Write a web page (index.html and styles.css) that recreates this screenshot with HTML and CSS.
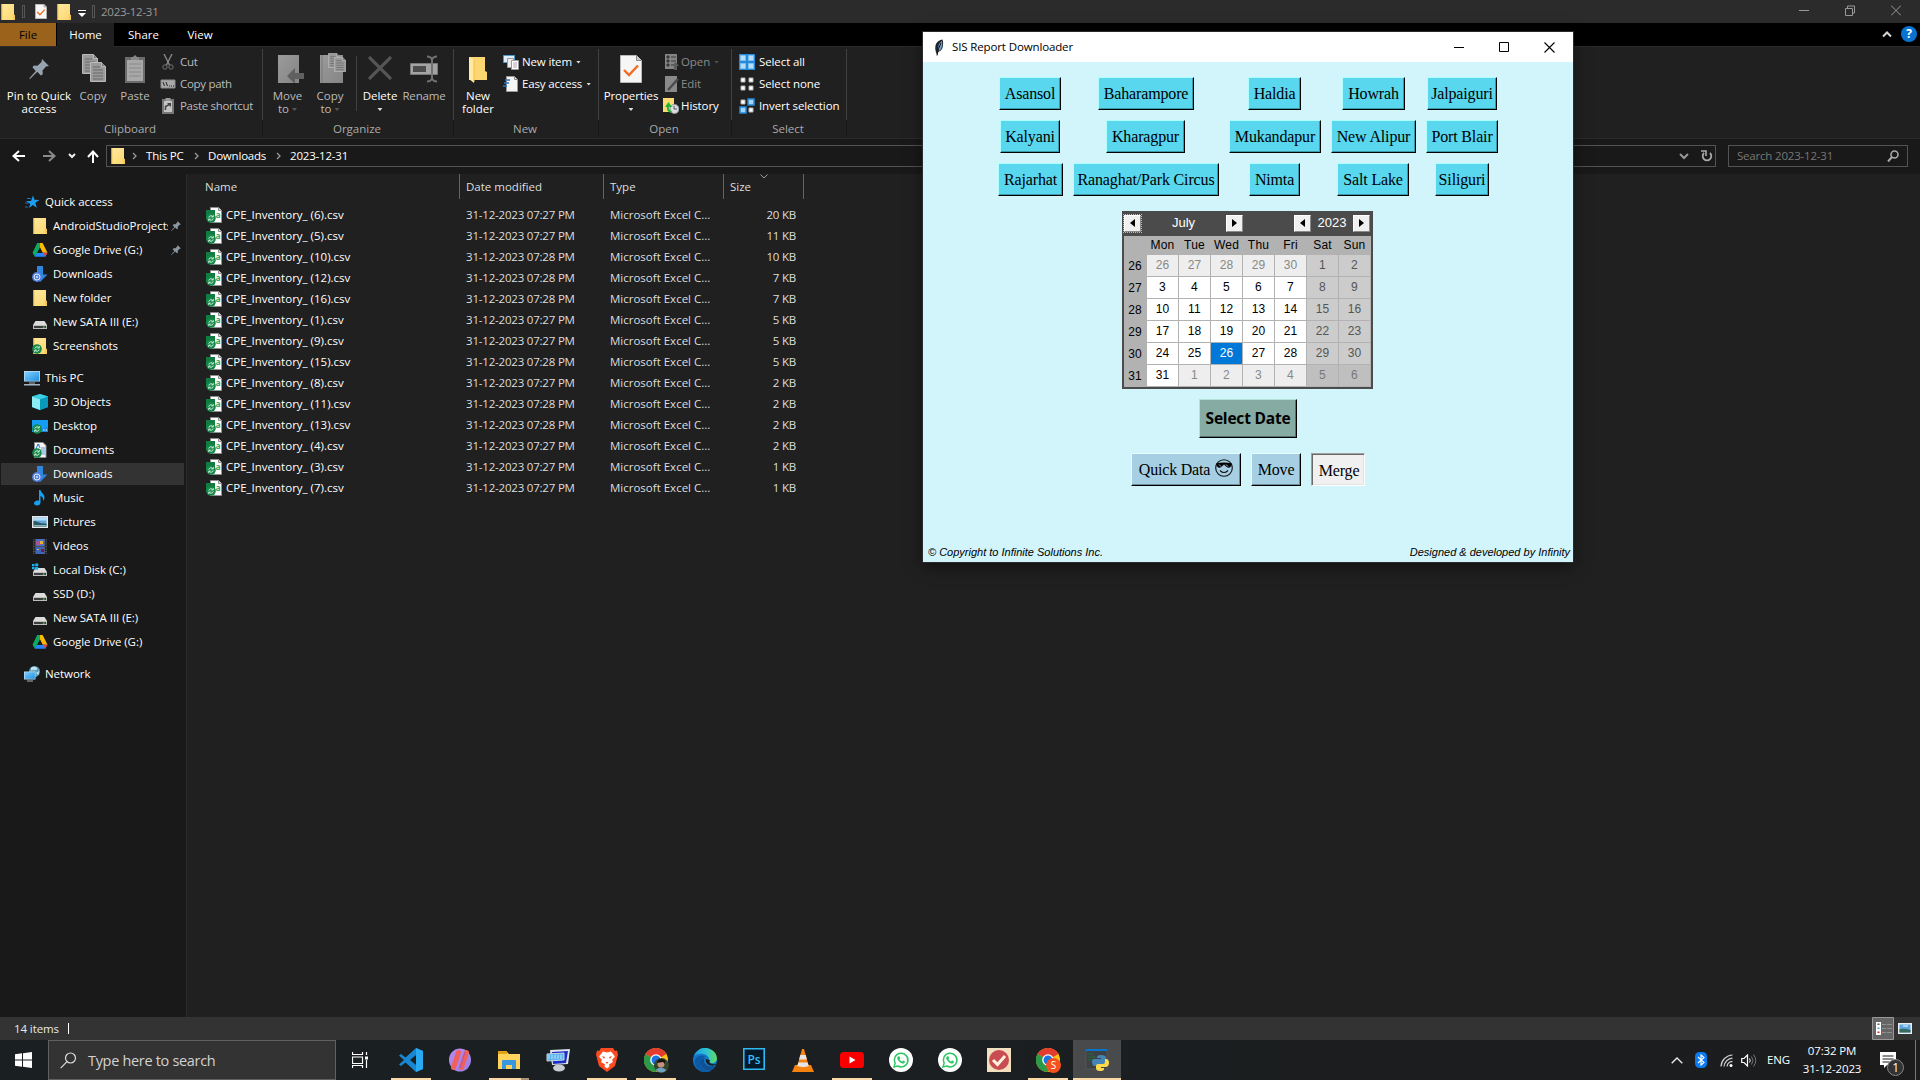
FILE: index.html
```html
<!DOCTYPE html>
<html lang="en">
<head>
<meta charset="utf-8">
<title>2023-12-31</title>
<link rel="stylesheet" href="styles.css">
</head>
<body>
<svg class="sprite" aria-hidden="true">
  <defs>
    <linearGradient id="g-fold" x1="0" y1="0" x2="1" y2="1"><stop offset="0" stop-color="#ffe9a2"/><stop offset="1" stop-color="#fbd66b"/></linearGradient>
    <linearGradient id="g-edge" x1="0" y1="0" x2="1" y2="0"><stop offset="0" stop-color="#1a9de0"/><stop offset=".55" stop-color="#2fc3cf"/><stop offset="1" stop-color="#62db5c"/></linearGradient>
    <linearGradient id="g-screen" x1="0" y1="0" x2="1" y2="1"><stop offset="0" stop-color="#7fd0ff"/><stop offset="1" stop-color="#2290e0"/></linearGradient>
    <linearGradient id="g-purple" x1="0" y1="0" x2="1" y2="1"><stop offset="0" stop-color="#b98af0"/><stop offset="1" stop-color="#9a80e0"/></linearGradient>
    <linearGradient id="g-gray" x1="0" y1="0" x2="1" y2="1"><stop offset="0" stop-color="#9b9b9b"/><stop offset="1" stop-color="#858585"/></linearGradient>
  </defs>
  <symbol id="folder" viewBox="0 0 16 16"><path d="M1.500 0H14v10.500l1 .5v5H1.500z" fill="url(#g-fold)"/><path d="M1.500 0h1v16h-1zM13 11h2v5h-2z" fill="#f4c95a"/></symbol>
  <symbol id="badge" viewBox="0 0 10 10"><circle cx="5" cy="5" r="4.800" fill="#16894a"/><path d="M2.800 4.600a2.300 2.300 0 0 1 4-1M7.200 5.400a2.300 2.300 0 0 1-4 1" fill="none" stroke="#d9f5e4" stroke-width="1"/><path d="M7.300 2v2H5.300M2.700 8V6h2" fill="none" stroke="#d9f5e4" stroke-width=".8"/></symbol>
  <symbol id="csv" viewBox="0 0 16 16"><path d="M4.500.5h8L15.500 3.500v12h-11z" fill="#fff" stroke="#8f8f8f"/><path d="M12.500.5v3h3" fill="#ddd" stroke="#8f8f8f"/><path d="M0 3h9v9H0z" fill="#107c41"/><use href="#badge" x="0" y="6" width="10" height="10"/></symbol>
  <symbol id="pin" viewBox="0 0 20 20"><path d="M13 0l7 7-3 .5-3.500 4 .3 3.700-2 1.300-3.500-3.700L1 20l-.8-.6 6.600-7.400-3.400-3.700 1.500-1.800 3.600.2 4-3.600z" fill="currentColor"/></symbol>
  <symbol id="star" viewBox="0 0 16 16"><path d="M9 1.500l1.500 4.200 5 .3-4.200 2.800 1.400 5L8.800 11 5 14l1.200-4.200L2 7h5z" fill="#1b9ef0"/><path d="M3 4.500h4M1 9h4M1 13h3" stroke="#1574b8"/></symbol>
  <symbol id="gdrive" viewBox="0 0 16 16"><path d="M5.400 1H8l3 5-3-.5-3 5.300L3 14.800l-2.300-4z" fill="#0da960"/><path d="M5.400 1h5.200l4.900 9.800h-5z" fill="#ffba00"/><path d="M5.400 1H8v4.500l-2.800 5.300L3 14.500l-2.300-3.700z" fill="#0da960"/><path d="M5 10.800h10.500l-2.300 4H3z" fill="#2684fc"/><path d="M11.500 10.800h4l-2.300 4z" fill="#ea4335"/><path d="M8 5.500l2.600 5.300H5.200z" fill="#191919"/></symbol>
  <symbol id="down" viewBox="0 0 16 16"><path d="M5 0h6v8.500h4.500L8 16 1 8.500h4z" fill="#2f86dc"/><circle cx="5" cy="11" r="5" fill="#4d7fe0"/><circle cx="5" cy="11" r="3" fill="none" stroke="#e6eeff"/><circle cx="5" cy="11" r="1" fill="#e6eeff"/></symbol>
  <symbol id="drive" viewBox="0 0 16 16"><path d="M3.500 7h9l2.500 4H1z" fill="#dcdcdc"/><path d="M1 11h14v4H1z" fill="#bdbdbd"/><path d="M2 12h12v2H2z" fill="#3d3d3d"/><path d="M11 12.500h1.500v1.200H11z" fill="#3fe03f"/></symbol>
  <symbol id="windrive" viewBox="0 0 16 16"><use href="#drive" width="16" height="16" y="-1"/><path d="M0 2h2.500v2.200H0zM3.200 1.500h3v2.700h-3zM0 5h2.500v2.200H0zM3.200 5h3v2.700h-3z" fill="#14b4f2"/></symbol>
  <symbol id="shots" viewBox="0 0 16 16"><use href="#folder" width="16" height="16"/><use href="#badge" y="6" width="10" height="10"/></symbol>
  <symbol id="pc" viewBox="0 0 16 16"><path d="M0 1h16v10.500H0z" fill="#b8dcf2"/><path d="M.8 1.800h14.400v9H.8z" fill="url(#g-screen)"/><path d="M5 12.500h6v1H5zM0 14h16v1.500H0z" fill="#9fb4c4"/></symbol>
  <symbol id="cube" viewBox="0 0 16 16"><path d="M8 0l8 2.500V13l-8 3-8-3V2.500z" fill="#19b8d6"/><path d="M0 2.500l8 2.700V16l-8-3z" fill="#8ceaf2"/><path d="M8 5.200l8-2.700V13l-8 3z" fill="#0899bc"/><path d="M0 2.500L8 0l8 2.500-8 2.700z" fill="#3bd0e2"/></symbol>
  <symbol id="desk" viewBox="0 0 16 16"><path d="M0 2h16v12H0z" fill="#1587d8"/><path d="M0 2h16v7L5 14H0z" fill="#159cf5"/><path d="M11 12h1.500M13.500 12H15" stroke="#fff"/><use href="#badge" y="6" width="10" height="10"/></symbol>
  <symbol id="docs" viewBox="0 0 16 16"><path d="M2.500.5H11l3 3v12H2.500z" fill="#f4f4f4" stroke="#8e8e8e"/><path d="M5 3h3M9 6h4M9 8h4M10 10h3M10 12h3" stroke="#5a9ad2"/><path d="M4 7l2-5 2 4" fill="none" stroke="#2a7fcc"/><use href="#badge" y="6" width="10" height="10"/></symbol>
  <symbol id="music" viewBox="0 0 16 16"><path d="M7 0h1.500c.5 3 4.500 4 4 8-.2 1.500-1 2-1.500 3 .5-3-1-4.500-2.500-5v6.500c0 1.700-1.500 3-3.500 3S2 14.500 2 13.300 3.500 10.500 5.500 10.500c.6 0 1 .1 1.500.3z" fill="#16a0f2"/></symbol>
  <symbol id="pics" viewBox="0 0 16 16"><path d="M0 2h16v12H0z" fill="#e8e8e8"/><path d="M1.500 3.500h13v9h-13z" fill="#62a7dc"/><path d="M1.500 3.500h13v3h-13z" fill="#b5dcf5"/><path d="M1.500 7c4 0 6 3 13 2.500v3h-13z" fill="#2a5a62"/><path d="M1.500 11h13v1.500h-13z" fill="#8bb0b6"/></symbol>
  <symbol id="vids" viewBox="0 0 16 16"><path d="M1 1h14v15H1z" fill="#4c4c4c"/><path d="M4 1h8.500v7H4z" fill="#4b6fc4"/><path d="M4 9h8.500v7H4z" fill="#3f66bd"/><path d="M4 4l3-1 3 4H4z" fill="#b0508c"/><path d="M8 3h3v3H8zM5 11h2v1H5z" fill="#e0b33a"/><path d="M9 11h3v3H9z" fill="#6e1e3e"/><path d="M2.300 1.500v14M13.800 1.500v14" stroke="#131313" stroke-width="1.300" stroke-dasharray="1.500 1"/></symbol>
  <symbol id="net" viewBox="0 0 16 16"><circle cx="10.500" cy="5.500" r="5.500" fill="#5a9cba"/><path d="M7 2c2-2 5-1 6 0s-1 3-3 2-2 2-3 0zM12 7l3-2-.5 4z" fill="#c4e2ee"/><path d="M0 5.500h11.500v8H0z" fill="#b8e0fa"/><path d="M.7 6.200h10.200v6.600H.7z" fill="url(#g-screen)"/><path d="M3 15h6" stroke="#a7b7c4"/></symbol>
  <symbol id="props" viewBox="0 0 22 28"><path d="M.5.5h16l5 5v22H.5z" fill="#f6f6f6" stroke="#b9b9b9"/><path d="M16.500.5v5h5" fill="#ccc" stroke="#8a8a8a"/><path d="M4 15l5 5 9-9.500" fill="none" stroke="#f26b21" stroke-width="2.400"/></symbol>
  <symbol id="paper" viewBox="0 0 16 20"><path d="M.5.5h11l4 4v15H.5z" fill="#9a9a9a" stroke="#bababa"/><path d="M11.500.5v4h4" fill="#777" stroke="#bababa"/><path d="M3 5h7M3 8h10M3 11h10M3 14h10M3 17h10" stroke="#686868"/></symbol>
  <symbol id="chrome" viewBox="0 0 24 24"><circle cx="12" cy="12" r="12" fill="#fbc116"/><path d="M12 12L1.600 6A12 12 0 0 1 22.400 6z" fill="#e33b2e"/><path d="M12 12L1.600 6A12 12 0 0 0 12 24l5.200-9z" fill="#299a49"/><circle cx="12" cy="12" r="5.800" fill="#fff"/><circle cx="12" cy="12" r="4.500" fill="#1b73e8"/></symbol>
  <symbol id="wa" viewBox="0 0 24 24"><circle cx="12" cy="12" r="12" fill="#fff"/><path d="M5 19l1.100-3.800A6.800 6.800 0 1 1 8.800 18z" fill="none" stroke="#2dc865" stroke-width="1.500"/><path d="M9.300 8.300l1.300.2.600 1.700-.7 1q1 1.700 2.700 2.300l1-1 1.800.9c0 1.800-1.500 2.300-2.700 2-2.300-.6-4.300-2.500-5-4.600-.2-1 .2-2 1-2.500z" fill="#2dc865"/></symbol>
</svg>

<div class="explorer">
  <header class="titlebar">
    <svg class="tb-folder" width="16" height="16"><use href="#folder"/></svg>
    <i class="grip"></i>
    <svg class="tb-props" width="12" height="15"><use href="#props"/></svg>
    <svg class="tb-folder2" width="16" height="16"><use href="#folder"/></svg>
    <svg class="tb-more" width="8" height="8"><path d="M0 .5h8" stroke="#fff"/><path d="M0 3h8L4 7z" fill="#fff"/></svg>
    <i class="grip"></i>
    <span class="tb-title">2023-12-31</span>
    <span class="win-buttons">
      <svg width="10" height="11"><path d="M0 5.500h10" stroke="#999"/></svg>
      <svg width="10" height="11"><path d="M.5 3.500h7v7h-7zM2.500 3V1h7v7H8" fill="none" stroke="#999"/></svg>
      <svg width="10" height="11"><path d="M0 .5l10 10M10 .5l-10 10" stroke="#999"/></svg>
    </span>
  </header>

  <nav class="tabs">
    <span class="tab file">File</span><span class="tab home">Home</span><span class="tab share">Share</span><span class="tab view">View</span>
    <svg class="collapse" width="10" height="7"><path d="M1 5.500l4-4 4 4" fill="none" stroke="#d5d5d5" stroke-width="2"/></svg>
    <span class="help">?</span>
  </nav>

  <section class="ribbon">
    <div class="group clipboard">
      <div class="tools">
        <div class="big lit pinq"><svg width="20" height="20" color="#97a4af"><use href="#pin"/></svg><span>Pin to Quick<br>access</span></div>
        <div class="big copy"><svg width="26" height="29"><use href="#paper" x="1" y="0" width="16" height="20"/><use href="#paper" x="9" y="8" width="16" height="20"/></svg><span>Copy</span></div>
        <div class="big paste"><svg width="20" height="28"><path d="M0 2h20v26H0z" fill="#6c6c6c"/><path d="M2 5h16v21H2z" fill="#a8a8a8"/><path d="M6 5V2h2l2-2 2 2h2v3z" fill="#888"/><path d="M4 9h12M4 13h12M4 17h12M4 21h12" stroke="#8a8a8a"/></svg><span>Paste</span></div>
        <div class="small">
          <div><svg width="16" height="16"><path d="M4 0l5.500 11M12 0L6.500 11" stroke="#8c8c8c" stroke-width="1.300"/><circle cx="5" cy="13" r="2.200" fill="none" stroke="#727272"/><circle cx="11" cy="13" r="2.200" fill="none" stroke="#727272"/></svg>Cut</div>
          <div><svg width="16" height="16"><path d="M1 4h14v8H1z" fill="#a9a9a9" stroke="#8a8a8a"/><path d="M3 6l1.500 4M6 6l1.500 4M9 10h1M11 10h1M13 10h1" stroke="#222"/></svg>Copy path</div>
          <div><svg width="16" height="16"><path d="M2 1h12v15H2z" fill="#777"/><path d="M4 3h8v11H4z" fill="#c4c4c4"/><path d="M5.500 0h5v3h-5z" fill="#999"/><path d="M5.500 12V8.500l4-2" stroke="#444" stroke-width="1.500" fill="none"/><path d="M7 5h4v4z" fill="#444"/></svg>Paste shortcut</div>
        </div>
      </div>
      <footer>Clipboard</footer>
    </div>
    <div class="group organize">
      <div class="tools">
        <div class="big move"><svg width="27" height="28"><path d="M1 0h21v28H1z" fill="url(#g-gray)"/><path d="M10 21l8-8v5h9v6h-9v5z" fill="#606060"/></svg><span>Move<br>to <i class="caret dim"></i></span></div>
        <div class="big copyto"><svg width="27" height="30"><path d="M1 2h23v28H1z" fill="url(#g-gray)"/><path d="M3 2v28" stroke="#777"/><use href="#paper" x="9" y="0" width="12" height="15"/><use href="#paper" x="15" y="4" width="12" height="15"/></svg><span>Copy<br>to <i class="caret dim"></i></span></div>
        <i class="vr"></i>
        <div class="big lit delete"><svg width="24" height="24"><path d="M1 1l22 22M23 1L1 23" stroke="#555" stroke-width="3.200"/></svg><span>Delete<br><i class="caret"></i></span></div>
        <div class="big rename"><svg width="28" height="28"><path d="M.5 8.500h27v11H.5z" fill="#a3a3a3" stroke="#777"/><path d="M3 11h13v6H3z" fill="#4c4c4c"/><path d="M17 1.500q4 0 5 3v19q-1 3-5 3M27 1.500q-4 0-5 3M22 23.500q1 3 5 3" fill="none" stroke="#707070" stroke-width="2"/></svg><span>Rename</span></div>
      </div>
      <footer>Organize</footer>
    </div>
    <div class="group new">
      <div class="tools">
        <div class="big lit newf"><svg width="18" height="28"><path d="M0 2h16v14l2 1v8H0z" fill="#fbd671"/><path d="M0 2l5 3v23l-5-4z" fill="#ffe9a4"/><path d="M5 5v22" stroke="#edc052"/></svg><span>New<br>folder</span></div>
        <div class="small">
          <div class="lit"><svg width="16" height="16"><path d="M.5 1.500h11v7H.5z" fill="#dbeefa" stroke="#4d9ac8"/><path d="M4.500 4.500h6v9h-6z" fill="#eee" stroke="#999"/><path d="M8.500 6.500h7v9h-7z" fill="#fff" stroke="#999"/><path d="M10 9h4M10 11h4M10 13h4" stroke="#b79db5"/></svg>New item<i class="caret"></i></div>
          <div class="lit"><svg width="16" height="16"><path d="M3.500.5h8l3 3v12h-11z" fill="#f5f5f5" stroke="#999"/><path d="M11.500.5v3h3" fill="none" stroke="#888"/><path d="M2 4h5M1 7h5M0 10h4" stroke="#2776bd" stroke-width="1.300"/></svg>Easy access<i class="caret"></i></div>
        </div>
      </div>
      <footer>New</footer>
    </div>
    <div class="group open">
      <div class="tools">
        <div class="big lit propsb"><svg width="22" height="28"><use href="#props"/></svg><span>Properties<br><i class="caret"></i></span></div>
        <div class="small">
          <div class="off"><svg width="16" height="16"><path d="M2 0h12v15H2z" fill="#858585"/><path d="M4 2h2v2H4zM4 6h2v2H4zM4 10h2v2H4zM8 3h5M8 7h5M8 11h3" fill="#383838" stroke="#383838"/><path d="M11 16v-4H9l3.500-4L16 12h-2v4z" fill="#5c5c5c"/></svg>Open<i class="caret dim"></i></div>
          <div class="off"><svg width="16" height="16"><path d="M2 0h12v16H2z" fill="#898989"/><path d="M5 14L15 3" stroke="#4b4b4b" stroke-width="2.500"/></svg>Edit</div>
          <div class="lit"><svg width="16" height="16"><path d="M0 0h11v14H0z" fill="#fbdb72"/><circle cx="11.500" cy="11" r="4.500" fill="#d9dde1" stroke="#8b949b"/><path d="M11 8v3h3" fill="none" stroke="#555"/><path d="M8.500 14Q4 13 5 8" stroke="#20b33a" stroke-width="2" fill="none"/><path d="M2 9l3.500-5L9 9z" fill="#20b33a"/></svg>History</div>
        </div>
      </div>
      <footer>Open</footer>
    </div>
    <div class="group select">
      <div class="tools">
        <div class="small">
          <div class="lit"><svg width="16" height="16"><path d="M0 0h16v16H0z" fill="#2489d8"/><path d="M1.500 1.500h5v5h-5zM9.500 1.500h5v5h-5zM1.500 9.500h5v5h-5zM9.500 9.500h5v5h-5z" fill="#b7dcf8" stroke="#7cc0f3"/></svg>Select all</div>
          <div class="lit"><svg width="16" height="16"><path d="M2 2h4v4H2zM10 2h4v4h-4zM2 10h4v4H2zM10 10h4v4h-4z" fill="#fff" stroke="#b5b5b5"/></svg>Select none</div>
          <div class="lit"><svg width="16" height="16"><path d="M2 2h4v4H2zM10 10h4v4h-4z" fill="#fff" stroke="#b5b5b5"/><path d="M9 1h6v6H9zM1 9h6v6H1z" fill="#a5d4f8" stroke="#2489d8" stroke-width="1.500"/></svg>Invert selection</div>
        </div>
      </div>
      <footer>Select</footer>
    </div>
  </section>

  <section class="address">
    <svg class="a-back" width="13" height="12"><path d="M7 1L1.500 6 7 11M1.500 6H13" fill="none" stroke="#fff" stroke-width="2"/></svg>
    <svg class="a-fwd" width="13" height="12"><path d="M6 1l5.500 5L6 11M11.500 6H0" fill="none" stroke="#8a8a8a" stroke-width="2"/></svg>
    <svg class="a-recent" width="8" height="6"><path d="M1 1l3 3 3-3" fill="none" stroke="#eee" stroke-width="2"/></svg>
    <svg class="a-up" width="12" height="13"><path d="M1 7l5-5.500L11 7M6 1.500V13" fill="none" stroke="#fff" stroke-width="2"/></svg>
    <div class="path">
      <svg class="p-folder" width="16" height="16"><use href="#folder"/></svg>
      <svg class="sep" width="5" height="8"><path d="M1 1l3 3-3 3" fill="none" stroke="#999" stroke-width="1.300"/></svg><span class="c1">This PC</span>
      <svg class="sep" width="5" height="8"><path d="M1 1l3 3-3 3" fill="none" stroke="#999" stroke-width="1.300"/></svg><span class="c2">Downloads</span>
      <svg class="sep" width="5" height="8"><path d="M1 1l3 3-3 3" fill="none" stroke="#999" stroke-width="1.300"/></svg><span class="c3">2023-12-31</span>
      <svg class="p-drop" width="10" height="7"><path d="M1 1l4 4 4-4" fill="none" stroke="#999" stroke-width="2"/></svg>
      <svg class="p-refresh" width="12" height="12"><path d="M3 3A4.300 4.300 0 1 0 9 3" fill="none" stroke="#aaa" stroke-width="1.800"/><path d="M0 1h5v5" fill="none" stroke="#aaa" stroke-width="1.600"/></svg>
    </div>
    <div class="search"><span>Search 2023-12-31</span><svg width="12" height="12"><circle cx="7.500" cy="4.500" r="3.500" fill="none" stroke="#aaa" stroke-width="1.600"/><path d="M5 7L1 11.500" stroke="#aaa" stroke-width="2"/></svg></div>
  </section>

  <main class="panes">
    <aside class="tree">
      <div class="node root"><svg><use href="#star"/></svg>Quick access</div>
      <div class="node"><svg><use href="#folder"/></svg><span class="clip">AndroidStudioProjects</span><svg class="pinned"><use href="#pin"/></svg></div>
      <div class="node"><svg><use href="#gdrive"/></svg><span class="clip">Google Drive (G:)</span><svg class="pinned"><use href="#pin"/></svg></div>
      <div class="node"><svg><use href="#down"/></svg>Downloads</div>
      <div class="node"><svg><use href="#folder"/></svg>New folder</div>
      <div class="node"><svg><use href="#drive"/></svg>New SATA III (E:)</div>
      <div class="node"><svg><use href="#shots"/></svg>Screenshots</div>
      <div class="node root"><svg><use href="#pc"/></svg>This PC</div>
      <div class="node"><svg><use href="#cube"/></svg>3D Objects</div>
      <div class="node"><svg><use href="#desk"/></svg>Desktop</div>
      <div class="node"><svg><use href="#docs"/></svg>Documents</div>
      <div class="node current"><svg><use href="#down"/></svg>Downloads</div>
      <div class="node"><svg><use href="#music"/></svg>Music</div>
      <div class="node"><svg><use href="#pics"/></svg>Pictures</div>
      <div class="node"><svg><use href="#vids"/></svg>Videos</div>
      <div class="node"><svg><use href="#windrive"/></svg>Local Disk (C:)</div>
      <div class="node"><svg><use href="#drive"/></svg>SSD (D:)</div>
      <div class="node"><svg><use href="#drive"/></svg>New SATA III (E:)</div>
      <div class="node"><svg><use href="#gdrive"/></svg>Google Drive (G:)</div>
      <div class="node root"><svg><use href="#net"/></svg>Network</div>
    </aside>
    <section class="files">
      <div class="head"><span>Name</span><span>Date modified</span><span>Type</span><span>Size<svg class="sort" width="8" height="5"><path d="M.5 .5L4 4 7.500.5" fill="none" stroke="#999"/></svg></span></div>
      <div class="row"><svg><use href="#csv"/><text x="9.600" y="11">a</text></svg><b>CPE_Inventory_ (6).csv</b><span>31-12-2023 07:27 PM</span><em>Microsoft Excel C...</em><i>20 KB</i></div>
      <div class="row"><svg><use href="#csv"/><text x="9.600" y="11">a</text></svg><b>CPE_Inventory_ (5).csv</b><span>31-12-2023 07:27 PM</span><em>Microsoft Excel C...</em><i>11 KB</i></div>
      <div class="row"><svg><use href="#csv"/><text x="9.600" y="11">a</text></svg><b>CPE_Inventory_ (10).csv</b><span>31-12-2023 07:28 PM</span><em>Microsoft Excel C...</em><i>10 KB</i></div>
      <div class="row"><svg><use href="#csv"/><text x="9.600" y="11">a</text></svg><b>CPE_Inventory_ (12).csv</b><span>31-12-2023 07:28 PM</span><em>Microsoft Excel C...</em><i>7 KB</i></div>
      <div class="row"><svg><use href="#csv"/><text x="9.600" y="11">a</text></svg><b>CPE_Inventory_ (16).csv</b><span>31-12-2023 07:28 PM</span><em>Microsoft Excel C...</em><i>7 KB</i></div>
      <div class="row"><svg><use href="#csv"/><text x="9.600" y="11">a</text></svg><b>CPE_Inventory_ (1).csv</b><span>31-12-2023 07:27 PM</span><em>Microsoft Excel C...</em><i>5 KB</i></div>
      <div class="row"><svg><use href="#csv"/><text x="9.600" y="11">a</text></svg><b>CPE_Inventory_ (9).csv</b><span>31-12-2023 07:27 PM</span><em>Microsoft Excel C...</em><i>5 KB</i></div>
      <div class="row"><svg><use href="#csv"/><text x="9.600" y="11">a</text></svg><b>CPE_Inventory_ (15).csv</b><span>31-12-2023 07:28 PM</span><em>Microsoft Excel C...</em><i>5 KB</i></div>
      <div class="row"><svg><use href="#csv"/><text x="9.600" y="11">a</text></svg><b>CPE_Inventory_ (8).csv</b><span>31-12-2023 07:27 PM</span><em>Microsoft Excel C...</em><i>2 KB</i></div>
      <div class="row"><svg><use href="#csv"/><text x="9.600" y="11">a</text></svg><b>CPE_Inventory_ (11).csv</b><span>31-12-2023 07:28 PM</span><em>Microsoft Excel C...</em><i>2 KB</i></div>
      <div class="row"><svg><use href="#csv"/><text x="9.600" y="11">a</text></svg><b>CPE_Inventory_ (13).csv</b><span>31-12-2023 07:28 PM</span><em>Microsoft Excel C...</em><i>2 KB</i></div>
      <div class="row"><svg><use href="#csv"/><text x="9.600" y="11">a</text></svg><b>CPE_Inventory_ (4).csv</b><span>31-12-2023 07:27 PM</span><em>Microsoft Excel C...</em><i>2 KB</i></div>
      <div class="row"><svg><use href="#csv"/><text x="9.600" y="11">a</text></svg><b>CPE_Inventory_ (3).csv</b><span>31-12-2023 07:27 PM</span><em>Microsoft Excel C...</em><i>1 KB</i></div>
      <div class="row"><svg><use href="#csv"/><text x="9.600" y="11">a</text></svg><b>CPE_Inventory_ (7).csv</b><span>31-12-2023 07:27 PM</span><em>Microsoft Excel C...</em><i>1 KB</i></div>
    </section>
  </main>

  <footer class="status">
    <span>14 items</span><i></i>
    <svg class="view-details" width="22" height="23"><path d="M.5.5h21v22H.5z" fill="#666" stroke="#999"/><path d="M4 5h5v13H4z" fill="#fff"/><path d="M5.500 6.500h2v1.500h-2z" fill="#456"/><path d="M5.500 10.500h2V12h-2z" fill="#4a9be0"/><path d="M5.500 14.500h2V16h-2z" fill="#d22"/><path d="M10 7.500h4m1 0h5M10 11.500h4m1 0h5M10 15.500h4m1 0h5" stroke="#909090"/></svg>
    <svg class="view-icons" width="14" height="11"><path d="M0 0h14v11H0z" fill="#eee"/><path d="M1.500 1.500h11v8h-11z" fill="#5aa7e4"/><path d="M1.500 6q5-1 11 1v2.500h-11z" fill="#396c5e"/><path d="M5 3h5" stroke="#fff"/></svg>
  </footer>
</div>

<section class="dialog">
  <header>
    <svg class="feather" width="10" height="17"><path d="M3 16Q0 9 2 5 4 1 8.500.5 10 5 8 10 6 13 4 13z" fill="#20242b"/><path d="M4.500 12Q3 5 8 2q1 4-1 8-1 2-2.500 2z" fill="#6a9fd8"/><path d="M3 16.500Q4 9 7 4" fill="none" stroke="#111"/></svg>
    <span>SIS Report Downloader</span>
    <svg class="d-min" width="10" height="11"><path d="M0 5.500h10" stroke="#000"/></svg>
    <svg class="d-max" width="10" height="10"><path d="M.5.5h9v9h-9z" fill="none" stroke="#000"/></svg>
    <svg class="d-close" width="11" height="11"><path d="M.5.5l10 10M10.500.5l-10 10" stroke="#000" stroke-width="1.100"/></svg>
  </header>
  <div class="branches">
    <button class="nudge" style="width:62px">Asansol</button><button style="width:96px">Baharampore</button><button class="nudge" style="width:53px">Haldia</button><button style="width:63px">Howrah</button><button style="width:70px">Jalpaiguri</button>
    <button class="nudge" style="width:60px">Kalyani</button><button class="nudge" style="width:79px">Kharagpur</button><button style="width:92px">Mukandapur</button><button style="width:85px">New Alipur</button><button style="width:72px">Port Blair</button>
    <button style="width:65px">Rajarhat</button><button style="width:146px">Ranaghat/Park Circus</button><button class="nudge" style="width:51px">Nimta</button><button class="nudge" style="width:72px">Salt Lake</button><button style="width:54px">Siliguri</button>
  </div>
  <div class="calendar">
    <div class="cal-head">
      <span class="step focus"><svg width="5" height="8"><path d="M5 0v8L0 4z"/></svg></span><span class="month">July</span><span class="step"><svg width="5" height="8"><path d="M0 0v8l5-4z"/></svg></span>
      <span class="step prev-year"><svg width="5" height="8"><path d="M5 0v8L0 4z"/></svg></span><span class="year">2023</span><span class="step"><svg width="5" height="8"><path d="M0 0v8l5-4z"/></svg></span>
    </div>
    <div class="cal-grid">
      <u></u><u>Mon</u><u>Tue</u><u>Wed</u><u>Thu</u><u>Fri</u><u>Sat</u><u>Sun</u>
      <u>26</u><s class="o">26</s><s class="o">27</s><s class="o">28</s><s class="o">29</s><s class="o">30</s><s class="w">1</s><s class="w">2</s>
      <u>27</u><s>3</s><s>4</s><s>5</s><s>6</s><s>7</s><s class="w">8</s><s class="w">9</s>
      <u>28</u><s>10</s><s>11</s><s>12</s><s>13</s><s>14</s><s class="w">15</s><s class="w">16</s>
      <u>29</u><s>17</s><s>18</s><s>19</s><s>20</s><s>21</s><s class="w">22</s><s class="w">23</s>
      <u>30</u><s>24</s><s>25</s><s class="sel">26</s><s>27</s><s>28</s><s class="w">29</s><s class="w">30</s>
      <u>31</u><s>31</s><s class="o">1</s><s class="o">2</s><s class="o">3</s><s class="o">4</s><s class="ow">5</s><s class="ow">6</s>
    </div>
  </div>
  <button class="pick">Select Date</button>
  <div class="actions">
    <button class="quick">Quick Data <svg width="18" height="18"><circle cx="9" cy="9" r="8.300" fill="none" stroke="#111" stroke-width="1.100"/><path d="M1 4.500q8-2 16 0l-1.500 3.500q-2.500 2-5-1L9 5.500 7.500 7q-2.500 3-5 1z"/><path d="M4 5.500l2 2M11 5.500l2 2" stroke="#a6cfe3"/><path d="M5 11.500q4 4 8 0" fill="none" stroke="#111" stroke-width="1.100"/></svg></button>
    <button class="movebtn">Move</button><button class="merge">Merge</button>
  </div>
  <footer><span>© Copyright to Infinite Solutions Inc.</span><span>Designed &amp; developed by Infinity</span></footer>
</section>

<footer class="taskbar">
  <span class="start"><svg width="17" height="16"><path d="M0 2.300l7-1v6.200H0zM8 1.200L17 0v7.500H8zM0 8.500h7v6.200l-7-1zM8 8.500h9V16l-9-1.200z" fill="#fff"/></svg></span>
  <div class="tsearch"><svg width="17" height="17"><circle cx="10.500" cy="6" r="5" fill="none" stroke="#ddd" stroke-width="1.200"/><path d="M7 9.700L.7 16.200" stroke="#ddd" stroke-width="1.200"/></svg><span>Type here to search</span></div>
  <span class="taskview"><svg width="17" height="16"><path d="M.5 0v2.500h10V0M.5 16v-2.500h10V16M.5 5h10v6.500H.5zM14.500 0v3M14.500 8v8" fill="none" stroke="#fff" stroke-width="1.200"/><path d="M13 4.500h3v3h-3z" fill="#fff"/></svg></span>
  <div class="apps">
    <span class="run"><svg width="24" height="24"><path d="M17 0l7 3v18l-7 3L6.500 14.500 2 18l-2-1.500 5-4.500-5-4.500L2 6l4.500 3.500zm0 7l-6 5 6 5z" fill="#1687d0" fill-rule="evenodd"/><path d="M17 0l7 3v18l-7 3z" fill="#2aa9f3"/></svg></span>
    <span><svg width="24" height="24"><ellipse cx="12" cy="12" rx="11" ry="11.500" fill="url(#g-purple)"/><path d="M5.500 19.500L10.500 4.500M13.500 19.500l5-15" stroke="#f2605c" stroke-width="5" stroke-linecap="round"/><path d="M12 20l5-16" stroke="#9a4fc0" stroke-width=".8"/></svg></span>
    <span class="run multi"><svg width="24" height="24"><path d="M1 4h9l2 2h11v15H1z" fill="#ffd35c"/><path d="M1 3h9v3H1z" fill="#e0a416"/><path d="M5 21v-8q0-1 1-1h12q1 0 1 1v8h-4v-4H9v4z" fill="#3a96de"/></svg></span>
    <span><svg width="24" height="24"><path d="M4 2l20-1-2 15-16 1z" fill="#dfe4ee"/><path d="M6 4l16-1-2 12-13 1z" fill="#1d2ec4"/><path d="M1 6l17-1v7L1 13z" fill="#5cb5ee" stroke="#c8d8e8"/><path d="M2 8h15M2 10h15" stroke="#e0f0fa" stroke-width=".7" stroke-dasharray="2 1"/><ellipse cx="13" cy="20" rx="6" ry="3.500" fill="#c9ccd2"/></svg></span>
    <span class="run"><svg width="24" height="24"><path d="M6 0h12l2 3 2-.5 1 4L20 18l-8 6-8-6L1 6.500l1-4 2 .5z" fill="#fb4b1f"/><path d="M12 4.500l4-1 4 5-3 3.500 1 2-4 2.500.5 2-2.500 2-2.500-2 .5-2-4-2.500 1-2-3-3.500 4-5z" fill="#fff"/><path d="M7 8l3 1-1 2zM17 8l-3 1 1 2zM10.500 14h3L12 16z" fill="#fb4b1f"/></svg></span>
    <span class="run"><svg width="26" height="26"><use href="#chrome" x="1" y="1" width="24" height="24"/><circle cx="18.500" cy="18.500" r="7.500" fill="#35432e"/><circle cx="18" cy="17" r="3.500" fill="#c5937b"/><path d="M14 16q1-6 8-3v4l-2-2z" fill="#15130f"/><path d="M12.500 23q5-5 11 0-5 5-11 0z" fill="#6fa0bd"/></svg></span>
    <span><svg width="24" height="24"><circle cx="12" cy="12" r="12" fill="#1476ca"/><path d="M1 8Q6-2 15 .3 24 3 24 11q-1 5-7 4-3-1-1-3c0-7-10-8-15-4z" fill="url(#g-edge)"/><path d="M8 14q-1 9 10 9-9 3-14-3-5-7 0-11 5-3 9 0-5 0-5 5z" fill="#0c59a4"/><path d="M12 10q-3 4 2 7.500 4 2 8 0-2 4.500-6 5.500Q7 21 8 14q0-4 4-4z" fill="#0f4f92"/><path d="M13 11q-1 4 3 6 4 1.500 7.500-.5l1-1.500-1.500 3v-2q-3 1-6-1-1-1 0-3z" fill="#1b2124"/></svg></span>
    <span><svg class="ps" width="22" height="22"><path d="M.8.800h20.400v20.400H.8z" fill="#061928" stroke="#2fb9f2" stroke-width="1.600"/><text x="11" y="15.500" text-anchor="middle" font-family="Open Sans, sans-serif" font-size="12" font-weight="600" fill="#35bdf5">Ps</text></svg></span>
    <span><svg width="22" height="24"><path d="M3 17h16l3 7H0z" fill="#f5820d"/><path d="M10 1h2l5 18q-6 3-12 0z" fill="#f58410"/><path d="M8.300 7h5.400l1.200 4.500H7.100zM6.300 14.500h9.400l1 3.500q-5 2-11.400 0z" fill="#e6e6e6"/></svg></span>
    <span class="run"><svg width="24" height="24"><rect y="4" width="24" height="16" rx="3.500" fill="#f80000"/><path d="M9.500 8.500v7l6-3.500z" fill="#fff"/></svg></span>
    <span><svg width="24" height="24"><use href="#wa"/></svg></span>
    <span><svg width="24" height="24"><use href="#wa"/></svg></span>
    <span><svg width="24" height="24"><path d="M0 0h24v24H0z" fill="#f2dfc0"/><circle cx="12" cy="12" r="10" fill="#c84c51"/><path d="M6 12l4.500 4.500L18 8" fill="none" stroke="#fff3df" stroke-width="3"/></svg></span>
    <span class="run"><svg width="26" height="26"><use href="#chrome" x="1" y="1" width="24" height="24"/><circle cx="18.500" cy="18.500" r="7.500" fill="#f4511e"/><text x="18.500" y="22" text-anchor="middle" font-family="Open Sans, sans-serif" font-size="10" fill="#fff">S</text></svg></span>
    <span class="run active"><svg width="24" height="24"><path d="M1 2h21v19H1z" fill="#3d4245" stroke="#555"/><path d="M1 1h21v2H1z" fill="#0a74cc"/><path d="M3 6h6M3 9h8M3 12h5" stroke="#276a3b"/><path d="M16 7q5 0 5 3v4q0 2-2 2h-5q-2 0-2 2H9q-2-1-2-4t2-3h7v-1h-4V9q0-2 4-2z" fill="#4584b6"/><path d="M15 23q-4 0-4-3v-2q0-2 2-2h5q2 0 2-2v-3h1q3 0 3 4 0 3-3 4h-5v1h3v1q0 2-4 2z" fill="#ffd94c"/></svg></span>
  </div>
  <div class="tray">
    <svg class="t-up" width="12" height="7"><path d="M.7 6.300L6 1l5.300 5.300" fill="none" stroke="#eee" stroke-width="1.300"/></svg>
    <svg class="t-bt" width="12" height="16"><rect width="12" height="16" rx="4.500" fill="#0a7bf0"/><path d="M3 5l6 5.500L6 13V3l3 2.500L3 11" fill="none" stroke="#fff" stroke-width="1.100"/></svg>
    <svg class="t-wifi" width="13" height="13"><path d="M1 12.500A12 12 0 0 1 12.500 1M4 12.500A9 9 0 0 1 12.500 4.200M7 12.500a6 6 0 0 1 5.500-5.200" fill="none" stroke="#ccc" stroke-width="1.200"/><circle cx="11" cy="11.500" r="1.500" fill="#fff"/></svg>
    <svg class="t-vol" width="16" height="13"><path d="M.7 4.500H3L6.500 1v11L3 8.500H.7z" fill="none" stroke="#fff" stroke-width="1.200"/><path d="M8.500 4.500q1.500 2 0 4" fill="none" stroke="#fff"/><path d="M10.500 2.500q3 4 0 8M12.500.5q4.500 6 0 12" fill="none" stroke="#777"/></svg>
    <span class="t-lang">ENG</span>
    <span class="t-clock">07:32 PM<br>31-12-2023</span>
    <svg class="t-note" width="26" height="25"><path d="M0 0h16v13H7l-3 3v-3H0z" fill="#fff"/><path d="M2.500 4h11M2.500 7h11M2.500 10h7" stroke="#1c1c1c"/><circle cx="15.500" cy="15.500" r="8" fill="#333" stroke="#888"/><text x="15.500" y="20" text-anchor="middle" font-family="Open Sans, sans-serif" font-size="12" fill="#fff">1</text></svg>
    <i class="peek"></i>
  </div>
</footer>
</body>
</html>
```
FILE: styles.css
```css
* { box-sizing: border-box; }

html, body {
  margin: 0;
  width: 1920px;
  height: 1080px;
  overflow: hidden;
  background: #202020;
}

body {
  display: flex;
  flex-direction: column;
  font: 11.5px/16px "Open Sans", "Noto Sans", sans-serif;
  color: #fff;
  white-space: nowrap;
}

svg { display: block; flex: none; }
.sprite { position: absolute; width: 0; height: 0; }
i, em, b { font-style: normal; font-weight: 400; }

.explorer { display: flex; flex-direction: column; height: 1040px; }

/* Title bar */
.titlebar { display: flex; align-items: center; height: 23px; background: #2b2b2b; }
.tb-folder { margin: 0 6px 0 0; }
.grip { width: 3px; height: 13px; border: 1px solid #555; }
.tb-props { margin-left: 10px; }
.tb-folder2 { margin-left: 9px; }
.tb-more { margin: 4px 6px 0 6px; }
.tb-title { margin-left: 6px; color: #999; letter-spacing: -.25px; }
.win-buttons { display: flex; gap: 36px; margin: -3px 19px 0 auto; }

/* Tabs */
.tabs { display: flex; height: 24px; background: #000; border-bottom: 1px solid #2b2b2b; }
.tab { height: 23px; line-height: 23px; text-align: center; }
.tab.file { width: 56px; background: #9a621b; color: #000; }
.tab.home { width: 57px; height: 24px; margin-left: 1px; background: #202020; }
.tab.share { width: 59px; }
.tab.view { width: 54px; }
.collapse { margin: 8px 9px 0 auto; }
.help { width: 16px; height: 16px; margin: 3px 3px 0 0; border-radius: 50%; background: #0a72d0; text-align: center; font-size: 12px; font-weight: 700; }

/* Ribbon */
.ribbon { display: flex; height: 92px; background: #202020; border-bottom: 1px solid #2b2b2b; }
.group { display: flex; flex-direction: column; height: 88px; margin-top: 2px; border-style: solid; border-image: linear-gradient(#414141 80%, #181818 80%) 1; border-width: 0 1px 0 0; }
.clipboard { width: 263px; }
.organize { width: 191px; }
.new { width: 145px; }
.open { width: 133px; }
.select { width: 115px; }
.tools { display: flex; height: 72px; }
.group footer { padding-right: 2px; text-align: center; color: #aaa; }
.big { display: flex; flex-direction: column; align-items: center; justify-content: flex-end; height: 68px; color: #bbb; text-align: center; line-height: 13px; }
.big span { height: 28px; }
.big svg { margin-bottom: 6px; }
.lit { color: #fff; }
.pinq { width: 78px; }
.pinq svg { margin-bottom: 10px; }
.copy { width: 30px; }
.copy svg { margin-left: 2px; }
.paste { width: 54px; }
.move { width: 49px; }
.move svg { margin-left: 5px; }
.copyto { width: 38px; margin-left: -1px; }
.copyto svg { margin-left: 5px; }
.vr { width: 1px; height: 55px; margin: 7px 2px 0 7px; background: #414141; }
.delete { width: 42px; }
.delete svg { margin-bottom: 9px; }
.rename { width: 46px; letter-spacing: -.15px; }
.newf { width: 48px; }
.propsb { width: 64px; letter-spacing: -.1px; }
.caret { display: inline-block; width: 5px; height: 3px; background: #ddd; clip-path: polygon(0 0, 100% 0, 50% 100%); vertical-align: 2px; }
.dim { background: #555; }
.small { display: flex; flex-direction: column; padding-top: 2px; color: #bbb; }
.small > div { display: flex; align-items: center; height: 22px; }
.small > .lit { color: #fff; }
.small > .off { color: #8a8a8a; }
.small svg { margin-right: 3px; }
.small .caret { margin-left: 4px; }
.clipboard .small { margin-left: -2px; letter-spacing: -.3px; }
.clipboard .small svg { margin-right: 4px; }
.new .small { margin-left: 1px; letter-spacing: -.15px; }
.open .small { letter-spacing: -.1px; }
.open .small svg { margin-right: 2px; }
.select .small { margin-left: 7px; letter-spacing: -.1px; }
.select .small svg { margin-right: 4px; }

/* Address row */
.address { display: flex; align-items: center; height: 35px; padding-bottom: 1px; background: #191919; }
.a-back { margin-left: 12px; }
.a-fwd { margin-left: 18px; }
.a-recent { margin-left: 12px; }
.a-up { margin: 0 7px 0 11px; }
.path { display: flex; align-items: center; width: 1610px; height: 22px; border: 1px solid #535353; }
.p-folder { margin: 0 6px 0 3px; }
.sep { margin-right: 9px; }
.c1 { width: 48px; }
.c2 { width: 68px; }
.path span { letter-spacing: -.2px; }
.p-drop { margin: 0 12px 0 auto; }
.p-refresh { margin-right: 2px; }
.search { display: flex; align-items: center; justify-content: space-between; width: 180px; height: 22px; margin-left: 12px; padding: 0 8px; border: 1px solid #535353; color: #777; letter-spacing: -.2px; }

/* Panes */
.panes { display: flex; flex: 1; min-height: 0; }
.tree { width: 187px; padding-top: 16px; background: #191919; border-right: 1px solid #2b2b2b; }
.node { display: flex; align-items: center; height: 24px; padding-left: 32px; letter-spacing: -.05px; }
.node svg { width: 16px; height: 16px; margin-right: 5px; }
.node.root { padding-left: 24px; }
.node:nth-child(n+2).root { margin-top: 8px; }
.node.current { width: 183px; height: 22px; margin: 1px 0 1px 1px; padding-left: 31px; background: #333; }
.clip { width: 115px; overflow: hidden; }
.node .pinned { width: 10px; height: 10px; margin-left: 3px; color: #8b979f; }

.files { flex: 1; background: #202020; color: #dedede; }
.head { display: flex; height: 31px; }
.head span { position: relative; height: 25px; padding: 5px 0 0 6px; border-right: 1px solid #636363; }
.head span:nth-child(1) { width: 273px; padding-left: 18px; }
.head span:nth-child(2) { width: 144px; }
.head span:nth-child(3) { width: 120px; }
.head span:nth-child(4) { width: 80px; }
.sort { position: absolute; top: 0; left: 36px; }
.row { display: grid; grid-template-columns: 20px 240px 144px 108px 78px; align-items: center; height: 21px; padding: 0 0 1px 19px; }
.row svg { width: 16px; height: 16px; }
.row text { font-size: 8.5px; font-weight: 700; fill: #27a566; }
.row b { color: #fff; }
.row span { letter-spacing: -.2px; }
.row i { text-align: right; letter-spacing: -.2px; }

/* Status bar */
.status { display: flex; align-items: center; height: 23px; padding-left: 14px; background: #333; color: #e8e8e8; letter-spacing: -.1px; }
.status i { width: 1px; height: 11px; margin-left: 9px; background: #fff; }
.view-details { margin-left: auto; }
.view-icons { margin: 0 8px 0 4px; }

/* Downloader window, floating above the explorer */
.dialog { position: absolute; left: 923px; top: 32px; width: 650px; height: 530px; display: flex; flex-direction: column; background: #d2f4fb; color: #000; box-shadow: 0 0 0 1px #2b2b2b, 0 4px 16px rgba(0, 0, 0, .5); }
.dialog header { display: flex; align-items: center; height: 30px; background: #fff; letter-spacing: -.13px; }
.feather { margin: 0 8px 0 11px; }
.d-min { margin-left: auto; }
.d-max { margin-left: 35px; }
.d-close { margin: 0 18px 0 35px; }
.branches { display: grid; grid-template-columns: 65px 146px 92px 85px 72px; grid-auto-rows: 33px; gap: 10px; justify-items: center; margin: 15px 0 0 75px; }
.dialog button { display: flex; align-items: center; justify-content: center; height: 33px; padding: 0; border-style: solid; border-width: 1px; border-color: #b0ffff #000 #000 #b0ffff; box-shadow: inset -1px -1px #3d98a8; background: #58d7ef; color: #000; font: 16px/20px "Liberation Serif", serif; letter-spacing: -.15px; white-space: nowrap; }
.dialog .nudge { margin-right: 1px; }

.calendar { width: 251px; height: 178px; margin: 15px 0 0 199px; padding: 2px; background: #4b4b4b; font: 12px/14px "Liberation Sans", sans-serif; }
.cal-head { display: flex; align-items: center; height: 23px; padding: 0 0 3px; color: #fff; font-size: 13px; }
.step { display: flex; align-items: center; justify-content: center; width: 17px; height: 17px; background: #f0f0f0; border: 1px solid #fff; border-color: #fff #8a8a8a #8a8a8a #fff; }
.step.focus { outline: 1px dotted #bbb; }
.month { width: 85px; text-align: center; }
.prev-year { margin-left: 51px; }
.year { width: 42px; text-align: center; }
.cal-grid { display: grid; grid-template-columns: 22px repeat(7, 31px); grid-template-rows: 18px repeat(6, 21px); gap: 1px; height: 151px; background: #b2b2b2; width: 247px; }
.cal-grid u, .cal-grid s { display: flex; align-items: center; justify-content: center; text-decoration: none; letter-spacing: .2px; }
.cal-grid s { background: #fff; padding-bottom: 1px; }
.cal-grid .o { background: #eee; color: #888; }
.cal-grid .w { background: #ccc; color: #555; }
.cal-grid .ow { background: #bfbfbf; color: #777; }
.cal-grid .sel { background: #0078d7; color: #fff; }

.dialog .pick { width: 98px; height: 39px; margin: 10px 0 0 276px; padding-bottom: 1px; background: #86aba2; border-color: #b5e0d8 #000 #000 #b5e0d8; box-shadow: inset -1px -1px #56716b; font: 700 15.5px/20px "Open Sans", sans-serif; letter-spacing: -.2px; }
.actions { display: flex; gap: 10px; margin: 15px 0 0 208px; }
.dialog .actions button { background: #a6cfe3; border-color: #e4ffff #000 #000 #e4ffff; box-shadow: inset -1px -1px #6c8d9c; }
.dialog .quick { width: 110px; gap: 5px; letter-spacing: -.2px; }
.quick svg { margin-top: -3px; }
.dialog .movebtn { width: 50px; }
.dialog .actions .merge { width: 54px; padding: 2px 0 0 2px; background: #f0f0f0; border-color: #a0a0a0 #fff #fff #a0a0a0; box-shadow: inset 1px 1px #696969, inset -1px -1px #e3e3e3; }
.dialog > footer { display: flex; justify-content: space-between; margin-top: auto; padding: 0 3px 3px 5px; font: italic 11px/14px "Liberation Sans", sans-serif; }

/* Taskbar */
.taskbar { display: flex; height: 40px; background: linear-gradient(90deg, #1a1f21, #1b1f21 45%, #1c1c1d); }
.start { width: 48px; padding: 12px 0 0 15px; }
.tsearch { display: flex; align-items: center; width: 288px; padding-left: 11px; background: #333; border: 1px solid #606060; color: #d2d2d2; font-size: 14.5px; letter-spacing: -.32px; }
.tsearch span { margin: 1px 0 0 11px; }
.taskview { width: 50px; padding: 12px 0 0 16px; }
.apps { display: flex; }
.apps span { position: relative; display: flex; align-items: center; justify-content: center; width: 49px; height: 40px; }
.apps .run::after { content: ""; position: absolute; left: 5px; bottom: 0; width: 40px; height: 2px; background: #fbd9a6; }
.apps .multi::after { background: linear-gradient(90deg, #fbd9a6 32px, #a79378 32px); }
.apps .active { background: #484a4b; margin-left: 1px; width: 48px; }
.apps .active::after { left: 0; width: 48px; }
.apps .ps { margin-top: -3px; }
.tray { display: flex; align-items: center; margin-left: auto; letter-spacing: -.15px; }
.t-bt { margin-left: 12px; }
.t-wifi { margin-left: 13px; }
.t-vol { margin-left: 8px; }
.t-lang { margin-left: 10px; width: 24px; }
.t-clock { width: 60px; margin-left: 11px; text-align: center; line-height: 18px; }
.t-note { margin: 12px 0 0 18px; align-self: flex-start; }
.peek { width: 1px; height: 40px; margin: 0 4px 0 9px; background: #777; }
```
